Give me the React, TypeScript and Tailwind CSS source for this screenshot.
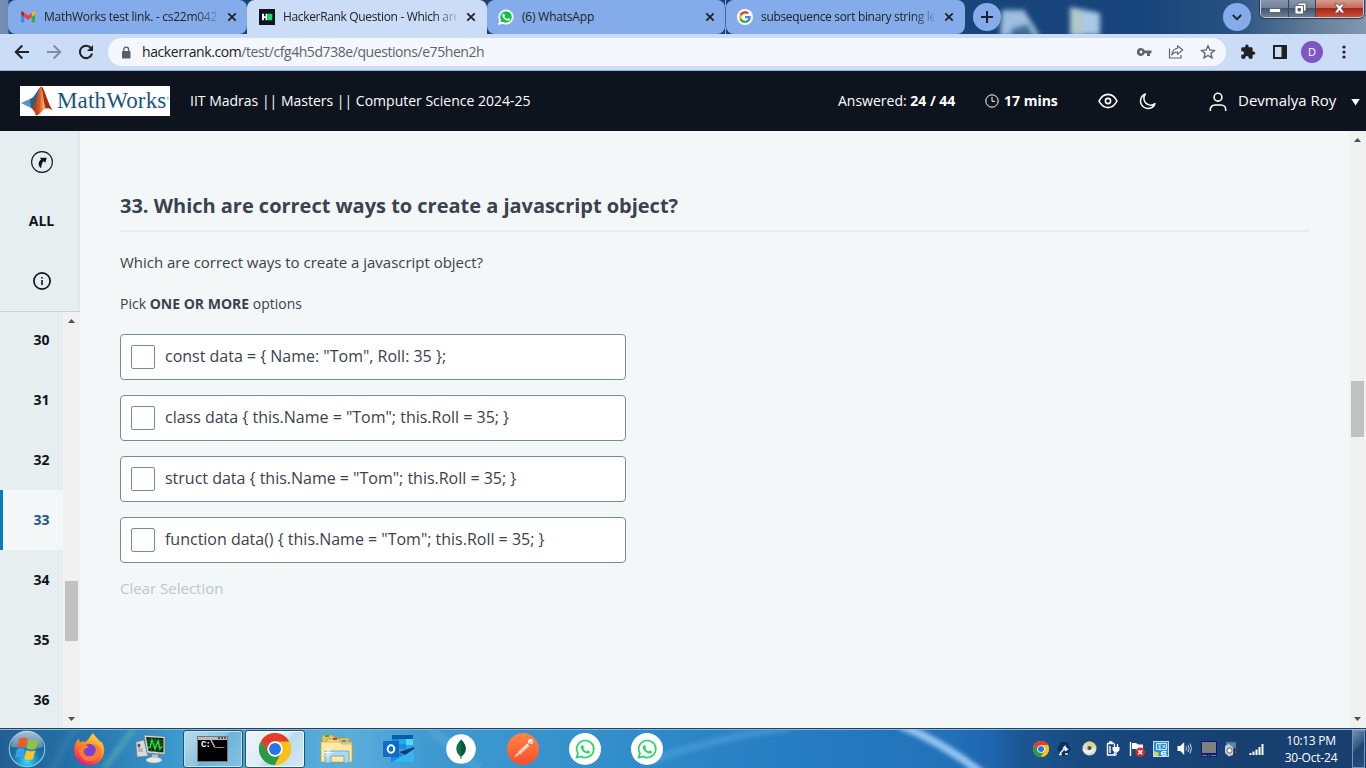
import React from "react";

const ChromeLogo = ({ size }: { size: number }) => (
  <svg width={size} height={size} viewBox="0 0 48 48" className="shrink-0">
    <circle cx="24" cy="24" r="24" fill="#fbc116" />
    <path d="M24 13 H45.3 L44.8 12 A24 24 0 0 0 3.2 12 L14 30 Z" fill="#e33b2e" />
    <path d="M3.2 12 L14.5 29.5 L24 35 L33.5 29.5 L24 48 A24 24 0 0 1 3.2 12Z" fill="#2a9a48" />
    <path d="M33.5 29.5 L24 48 A24 24 0 0 0 45.3 13 H24 Z" fill="#fbc116" />
    <circle cx="24" cy="24" r="11.5" fill="#fff" />
    <circle cx="24" cy="24" r="9" fill="#2a72e8" />
  </svg>
);

const waBubble =
  "M12 2a10 10 0 0 0-8.6 15.1L2 22l5-1.3A10 10 0 1 0 12 2Z";
const waPhone =
  "M8.9 6.9c-.3-.6-.5-.6-.8-.6h-.6c-.3 0-.7.1-1 .5-.4.4-1.300 1.200-1.300 3s1.300 3.500 1.500 3.700c.2.3 2.500 4 6.200 5.400 3 1.200 3.700.9 4.300.8.7 0 2.100-.8 2.400-1.700.3-.8.3-1.500.2-1.700-.1-.2-.3-.3-.7-.4l-2.400-1.200c-.3-.1-.6-.2-.8.2l-1.100 1.400c-.2.2-.4.3-.8.1a9 9 0 0 1-4.700-4.200c-.4-.6.4-.6 1-1.900.1-.2 0-.4 0-.6z";

const WhatsAppTask = () => (
  <svg width="32" height="32" viewBox="0 0 32 32">
    <circle cx="16" cy="16" r="16" fill="#fff" />
    <path d="M16.200 7.500a8.500 8.500 0 0 0-7.300 12.800L7.700 24.600l4.400-1.200A8.500 8.500 0 1 0 16.200 7.500Z" fill="none" stroke="#2bd366" strokeWidth="1.700" />
    <g transform="translate(8.6 8.300) scale(.62)">
      <path d={waPhone} fill="#2bd366" />
    </g>
  </svg>
);

const Close = () => (
  <svg width="10" height="10" viewBox="0 0 10 10" className="shrink-0">
    <path d="M1.300 1.300 8.700 8.700M8.700 1.300 1.300 8.700" stroke="#202124" strokeWidth="1.800" />
  </svg>
);

const Gmail = () => (
  <svg width="16" height="16" viewBox="0 0 16 16" className="shrink-0">
    <path d="M1 4v8.500c0 .6.400 1 1 1h2.300V6.700z" fill="#4285f4" />
    <path d="M15 4v8.500c0 .6-.400 1-1 1h-2.300V6.700z" fill="#34a853" />
    <path d="M11.700 3.800 13 2.800c.9-.600 2-.1 2 1v1.800l-3.300 2.500z" fill="#fbbc04" />
    <path d="M4.300 3.800 3 2.800c-.900-.600-2-.1-2 1v1.800l3.300 2.500z" fill="#c5221f" />
    <path d="M4.300 3.800 8 6.600l3.700-2.800v4.300L8 10.900 4.300 8.100z" fill="#ea4335" />
  </svg>
);

const HackerRank = () => (
  <svg width="16" height="16" viewBox="0 0 16 16" className="shrink-0">
    <rect width="16" height="16" fill="#0e141e" />
    <path d="M3 4.700h2v2.500h1.500V4.700h2v6.600h-2V8.900H5v2.400H3z" fill="#fff" />
    <rect x="9" y="4.700" width="4.300" height="6.600" fill="#00e95f" />
  </svg>
);

const WhatsAppTab = () => (
  <svg width="16" height="16" viewBox="0 0 24 24" className="shrink-0">
    <path d={waBubble} fill="#12c143" stroke="#fff" strokeWidth="2.600" />
    <g transform="translate(2.200 1.800) scale(.8)">
      <path d={waPhone} fill="#fff" />
    </g>
  </svg>
);

const Google = () => (
  <svg width="16" height="16" viewBox="0 0 32 32" className="shrink-0">
    <circle cx="16" cy="16" r="16" fill="#fff" />
    <g transform="translate(4 4)">
      <path fill="#4285f4" d="M23.500 12.300c0-.9-.1-1.500-.2-2.200H12v4.500h6.500a5.600 5.600 0 0 1-2.400 3.600v3h3.900c2.200-2.100 3.500-5.200 3.500-8.900z" />
      <path fill="#34a853" d="M12 24c3.200 0 6-1.100 8-2.900l-3.900-3a7.200 7.200 0 0 1-10.700-3.800h-4v3.100A12 12 0 0 0 12 24z" />
      <path fill="#fbbc05" d="M5.400 14.300a7.200 7.200 0 0 1 0-4.600V6.600h-4a12 12 0 0 0 0 10.800z" />
      <path fill="#ea4335" d="M12 4.800c1.800 0 3.300.6 4.600 1.800L20 3.200A12 12 0 0 0 1.400 6.600l4 3.100A7.200 7.200 0 0 1 12 4.800z" />
    </g>
  </svg>
);

type TabProps = { icon: React.ReactNode; title: string; box: string; text: string; fade?: boolean };

const Tab = ({ icon, title, box, text, fade }: TabProps) => (
  <div className={"flex h-[34px] shrink-0 items-center text-[12px] text-[#202124] " + box}>
    {icon}
    <span
      className={
        "ml-2 min-w-0 flex-1 whitespace-nowrap leading-[18px] " +
        text +
        (fade ? " [mask-image:linear-gradient(90deg,#000_87%,transparent_103%)]" : "")
      }
    >
      {title}
    </span>
    <span className="ml-[10px] flex">
      <Close />
    </span>
  </div>
);

const TabStrip = () => (
  <div className="relative flex h-[34px] bg-[linear-gradient(90deg,#7890ae_0,#6f8cb1_8px,#174478_9px,#17447a_1140px,#275080_1230px,#67809d_1320px,#8298af_1366px)] pl-2">
    <svg className="absolute left-[960px] top-0" width="160" height="34" viewBox="0 0 160 34">
      <defs>
        <filter id="soft" x="-30%" y="-30%" width="160%" height="160%">
          <feGaussianBlur stdDeviation="2.500" />
        </filter>
      </defs>
      <g filter="url(#soft)">
        <path d="M42 10h22l16 26H40z" fill="#9fbfe0" />
        <path d="M52 28l16-4 6 12H50z" fill="#3f709c" />
        <path d="M110 7l30 6v22h-30z" fill="#a9c9e8" />
        <path d="M111 8l12 2v26h-12z" fill="#b1c9c9" />
      </g>
    </svg>
    <Tab icon={<Gmail />} title="MathWorks test link. - cs22m042" box="w-[239px] rounded-[8px] bg-[#85acea] pl-[12px] pr-[10px]" text="tracking-[-0.27px]" fade />
    <Tab icon={<HackerRank />} title="HackerRank Question - Which are" box="w-[240px] rounded-t-[8px] bg-[#cbdcf7] pl-[12px] pr-[11px]" text="tracking-[-0.34px]" fade />
    <Tab icon={<WhatsAppTab />} title="(6) WhatsApp" box="w-[238px] rounded-[8px] bg-[#85acea] pl-[11px] pr-[10px]" text="tracking-[-0.2px]" />
    <div className="flex h-[34px] w-px items-center bg-[#85acea]">
      <div className="h-5 w-px bg-[#4a6796]" />
    </div>
    <Tab icon={<Google />} title="subsequence sort binary string le" box="w-[239px] rounded-[8px] bg-[#85acea] pl-[11px] pr-[11px]" text="tracking-[-0.33px]" fade />
    <div className="relative ml-2 mt-[3px] flex size-7 items-center justify-center rounded-full bg-[#85acea]">
      <svg width="12" height="12" viewBox="0 0 12 12">
        <path d="M6 0v12M0 6h12" stroke="#202124" strokeWidth="2" />
      </svg>
    </div>
    <div className="ml-[222px] mt-[3px] flex size-7 items-center justify-center rounded-full bg-[#85acea]">
      <svg width="10" height="7" viewBox="0 0 10 7">
        <path d="M.8 1 5 5.200 9.200 1" fill="none" stroke="#202124" strokeWidth="1.800" />
      </svg>
    </div>
    <div className="ml-[9px] flex h-[18px] w-[104px] overflow-hidden rounded-b-[5px] border border-t-0 border-[#c4ced9] shadow-[0_0_1px_1px_#26384d]">
      <div className="flex w-[28px] items-center justify-center border-r border-[#33475e] bg-[linear-gradient(#8796aa_0,#6f8198_45%,#42566f_50%,#6b7e94_100%)]">
        <svg width="12" height="6" viewBox="0 0 12 6" className="mt-1">
          <rect x=".5" y=".5" width="11" height="4" rx=".5" fill="#fff" stroke="#4b5563" strokeWidth=".8" />
        </svg>
      </div>
      <div className="flex w-[27px] items-center justify-center border-r border-[#33475e] bg-[linear-gradient(#8796aa_0,#6f8198_45%,#42566f_50%,#6b7e94_100%)] pb-px pr-[3px]">
        <svg width="13" height="13" viewBox="0 0 13 13">
          <path d="M4 1h8v8H9.500V3.500H4z" fill="#fff" stroke="#4b5563" strokeWidth=".8" />
          <path d="M1 3.500h8.500V12H1zM4 6.500v2.500h2.500V6.500z" fillRule="evenodd" fill="#fff" stroke="#4b5563" strokeWidth=".8" />
        </svg>
      </div>
      <div className="flex flex-1 items-center justify-center bg-[linear-gradient(#d99a8f_0,#c66a59_45%,#a82613_50%,#c8503a_100%)] pb-px">
        <svg width="13" height="11" viewBox="0 0 13 11">
          <path d="M1.500 1h3.200L6.500 3l1.800-2h3.200L8.300 5.300 11.700 10H8.300L6.500 7.500 4.700 10H1.300l3.400-4.700z" fill="#fff" stroke="#4a4f5c" strokeWidth=".8" />
        </svg>
      </div>
    </div>
  </div>
);

const Toolbar = () => (
  <div className="flex h-[37px] items-center border-b border-[#9fb4d3] bg-[#cbdcf7] pl-[14px]">
    <svg width="16" height="16" viewBox="0 0 16 16">
      <path d="M15 8H2M8.300 1.500 1.800 8l6.500 6.500" fill="none" stroke="#202124" strokeWidth="2" />
    </svg>
    <svg width="16" height="16" viewBox="0 0 16 16" className="ml-4">
      <path d="M1 8h13M7.700 1.500 14.200 8l-6.500 6.500" fill="none" stroke="#838d9f" strokeWidth="2" />
    </svg>
    <svg width="16" height="16" viewBox="0 0 16 16" className="ml-4">
      <path d="M13.300 4.500A6.200 6.200 0 1 0 14.100 9.500" fill="none" stroke="#202124" strokeWidth="2" />
      <path d="M15 1v6H9z" fill="#202124" />
    </svg>
    <div className="ml-[14px] flex h-7 w-[1118px] items-center rounded-full bg-[#f4f7fd] pl-[13px]">
      <svg width="10" height="13" viewBox="0 0 10 13">
        <rect x="1" y="5" width="8.500" height="7.500" rx="1" fill="#5a5d62" />
        <path d="M2.800 5V3.500a2.400 2.400 0 0 1 4.800 0V5" fill="none" stroke="#5a5d62" strokeWidth="1.300" />
      </svg>
      <span className="ml-[11px] w-[400px] whitespace-nowrap text-[14px] leading-5 tracking-[-0.43px] text-[#5f6368]">
        <span className="text-[#202124]">hackerrank.com</span>/test/cfg4h5d738e/questions/e75hen2h
      </span>
      <svg width="15" height="10" viewBox="0 0 15 10" className="ml-[595px]">
        <path d="M4 1a4 4 0 1 0 3.700 5.300H10V9h3V6.300h1.500V3.600H7.700A4 4 0 0 0 4 1Zm0 2.600a1.400 1.400 0 1 1 0 2.800 1.400 1.400 0 0 1 0-2.800Z" fill="#5f6368" fillRule="evenodd" />
      </svg>
      <svg width="16" height="16" viewBox="0 0 16 16" className="ml-[16px]">
        <path d="M1.500 4.500v9.500h11.500V11" fill="none" stroke="#5f6368" strokeWidth="1.200" />
        <path d="M9.500 1.800 14.700 6 9.500 10.300V8C6.800 8 5 9 3.700 11c.4-3.300 2.300-6.200 5.800-6.800z" fill="none" stroke="#5f6368" strokeWidth="1.100" strokeLinejoin="round" />
      </svg>
      <svg width="16" height="16" viewBox="0 0 16 16" className="ml-4">
        <path d="m8 1.800 1.800 4.200 4.600.4-3.500 3 1.100 4.500L8 11.500l-4 2.400 1.100-4.500-3.500-3L6.200 6z" fill="none" stroke="#5f6368" strokeWidth="1.300" />
      </svg>
    </div>
    <svg width="16" height="16" viewBox="0 0 16 16" className="ml-[14px]">
      <path d="M13.600 7.400h-1V4.600c0-.7-.6-1.300-1.300-1.300H8.600v-1a1.700 1.700 0 0 0-3.400 0v1H2.600c-.7 0-1.300.6-1.300 1.300v2.600h1a1.800 1.800 0 0 1 0 3.600h-1v2.600c0 .7.600 1.300 1.300 1.300h2.600v-1a1.800 1.800 0 0 1 3.600 0v1h2.500c.7 0 1.300-.6 1.300-1.300v-2.600h1a1.700 1.700 0 0 0 0-3.400z" fill="#202124" />
    </svg>
    <svg width="14" height="14" viewBox="0 0 14 14" className="ml-[17px]">
      <path d="M0 0h14v14H0zM2 2v10h6.500V2z" fillRule="evenodd" fill="#202124" />
    </svg>
    <div className="ml-[14px] flex size-[22px] items-center justify-center rounded-full bg-[#7e57c2] text-[11px] text-white">D</div>
    <svg width="4" height="14" viewBox="0 0 4 14" className="ml-[19px]">
      <circle cx="2" cy="2" r="1.600" fill="#202124" />
      <circle cx="2" cy="7" r="1.600" fill="#202124" />
      <circle cx="2" cy="12" r="1.600" fill="#202124" />
    </svg>
  </div>
);

const MathWorksLogo = () => (
  <div className="flex h-[30px] w-[150px] items-center bg-white">
    <svg width="36" height="30" viewBox="0 0 36 30" className="shrink-0">
      <defs>
        <linearGradient id="mwA" x1="0" x2="1">
          <stop offset="0" stopColor="#8c2a12" />
          <stop offset=".4" stopColor="#d95a23" />
          <stop offset=".6" stopColor="#f5b070" />
          <stop offset="1" stopColor="#a5301a" />
        </linearGradient>
      </defs>
      <path d="M1 17 11 12.500l5 4.500-5 5z" fill="#4f97cf" />
      <path d="M10 13c5-1 7-10 11-12l-4 18-6 3z" fill="#2b5f86" />
      <path d="M21 .5c4 0 6 16.500 11.800 24-4-3-7-3-10 0-3 3-4.500 5-7 5-1-4-2.500-6.500-5-7.500C17 20 17 4 21 .5z" fill="url(#mwA)" />
      <path d="M21 .5c4 2 6 17 11.800 24-3-3-5-3-7-2C23 15 23.500 6 21 .5z" fill="#9f2e1b" />
    </svg>
    <span className="ml-px whitespace-nowrap font-['Liberation_Serif',serif] text-[23px] leading-[30px] tracking-[0.15px] text-[#17557f]">
      MathWorks
    </span>
    <span className="-mt-1 text-[3px] text-[#17557f]">®</span>
  </div>
);

const Header = () => (
  <header className="flex h-[60px] items-center bg-[#0e141e] pl-5 text-[14px] text-white">
    <MathWorksLogo />
    <div className="-mt-0.5 ml-5 w-[648px] whitespace-nowrap">IIT Madras || Masters || Computer Science 2024-25</div>
    <div className="-mt-0.5 w-[147px] whitespace-nowrap">
      Answered: <b className="font-bold">24 / 44</b>
    </div>
    <svg width="14" height="14" viewBox="0 0 14 14" fill="none" stroke="#fff">
      <circle cx="7" cy="7" r="6.200" />
      <path d="M7 3v4.300h3" />
    </svg>
    <b className="-mt-0.5 ml-[5px] w-[94px] whitespace-nowrap font-bold">17 mins</b>
    <svg width="20" height="16" viewBox="0 0 20 16" fill="none" stroke="#fff" strokeWidth="1.600">
      <path d="M1 8c2-4 5.200-6.600 9-6.600S17 4 19 8c-2 4-5.200 6.600-9 6.600S3 12 1 8z" />
      <circle cx="10" cy="8" r="2.600" />
    </svg>
    <svg width="17" height="17" viewBox="0 0 24 24" fill="none" stroke="#fff" strokeWidth="2.100" className="ml-[21px]">
      <path d="M22.500 15A10.500 10.500 0 1 1 9 1.500a9.600 9.600 0 0 0 13.500 13.500z" strokeLinejoin="round" />
    </svg>
    <svg width="18" height="20" viewBox="0 0 18 20" fill="none" stroke="#fff" strokeWidth="1.600" className="ml-[53px] mt-px">
      <circle cx="9" cy="5.200" r="3.900" />
      <path d="M1.300 19v-1.500a4.500 4.500 0 0 1 4.500-4.500h6.400a4.500 4.500 0 0 1 4.500 4.500V19" />
    </svg>
    <span className="-mt-0.5 ml-[11px] w-[113px] whitespace-nowrap text-[15px]">Devmalya Roy</span>
    <svg width="9" height="7" viewBox="0 0 9 7" className="mt-0.5">
      <path d="M.3 0h8.500L4.600 6.500z" fill="#fff" />
    </svg>
  </header>
);

const Arrow = ({ up }: { up?: boolean }) => (
  <svg width="7" height="4" viewBox="0 0 7 4" className="shrink-0">
    <path d={up ? "M0 4 3.500 0 7 4z" : "M0 0h7L3.500 4z"} fill="#505050" />
  </svg>
);

const Sidebar = () => (
  <aside className="flex w-20 flex-col bg-[#e7eeef] shadow-[inset_-2px_0_2px_-1px_#dbe3e6] text-[14px] font-bold text-[#0e141e]">
    <div className="flex h-[181px] flex-col items-center border-b border-[#c5d1d3] pl-[3px]">
      <div className="flex h-[61px] items-center">
        <svg width="22" height="22" viewBox="0 0 22 22">
          <circle cx="11" cy="11" r="10.400" fill="none" stroke="#0e141e" strokeWidth="1.100" />
          <path d="M8.700 6.800h7l-1.300 5-1.800-1.500c-1.500 1-2 3-2.500 7C6.800 15 6.800 11 10.200 8.300z" fill="#0e141e" />
        </svg>
      </div>
      <div className="flex h-[59px] items-center pb-0.5">ALL</div>
      <div className="flex h-[60px] items-center">
        <svg width="18" height="18" viewBox="0 0 18 18">
          <circle cx="9" cy="9" r="8.100" fill="none" stroke="#0e141e" strokeWidth="1.700" />
          <path d="M8.200 5h1.600v1.600H8.200zM8.200 8h1.600v5H8.200z" fill="#0e141e" />
        </svg>
      </div>
    </div>
    <div className="flex min-h-0 flex-1">
      <div className="-mt-0.5 h-[418px] w-[63px] overflow-hidden">
        {["30", "31", "32", "33", "34", "35", "36"].map((n) => (
          <div
            key={n}
            className={
              "flex h-[60px] items-center justify-center pb-0.5 pr-0.5 " +
              (n === "33" ? "border-l-[3px] border-[#097bbf] bg-[#f3f7f7] pl-[19px] text-[#1c5a85]" : "pl-[22px]")
            }
          >
            {n}
          </div>
        ))}
      </div>
      <div className="flex w-[17px] flex-col items-center bg-[#f1f1f1] py-[7px]">
        <Arrow up />
        <div className="mt-[258px] h-[60px] w-[13px] bg-[#c1c1c1]" />
        <div className="flex-1" />
        <Arrow />
      </div>
    </div>
  </aside>
);

const options = [
  'const data = { Name: "Tom", Roll: 35 };',
  'class data { this.Name = "Tom"; this.Roll = 35; }',
  'struct data { this.Name = "Tom"; this.Roll = 35; }',
  'function data() { this.Name = "Tom"; this.Roll = 35; }',
];

const Question = () => (
  <main className="flex-1 bg-[#f3f7f7] pl-10 text-[#39424e]">
    <h1 className="mt-[60px] h-[41px] w-[1190px] border-b-2 border-[#e7eeef] text-[20px] font-bold leading-[30px] tracking-[-0.02px]">
      33. Which are correct ways to create a javascript object?
    </h1>
    <p className="mt-[19px] text-[15px] leading-[22px] tracking-[-0.02px]">Which are correct ways to create a javascript object?</p>
    <p className="mt-[20px] text-[14px] leading-[22px]">
      Pick <b className="font-bold">ONE OR MORE</b> options
    </p>
    <div className="mt-[19px] flex w-[506px] flex-col gap-[15px]">
      {options.map((o) => (
        <label key={o} className="flex h-[46px] items-center rounded-[4px] border border-[#738f93] bg-white pl-[10px] text-[16px]">
          <span className="size-6 rounded-[2px] border border-[#738f93]" />
          <span className="-mt-0.5 ml-[10px] whitespace-nowrap leading-6 tracking-[-0.01px]">{o}</span>
        </label>
      ))}
    </div>
    <p className="mt-[14px] text-[15px] leading-[22px] text-[#b7c9cc]">Clear Selection</p>
  </main>
);

const StartOrb = () => (
  <svg width="38" height="38" viewBox="0 0 38 38">
    <defs>
      <radialGradient id="orb" cx=".5" cy=".85" r=".8">
        <stop offset="0" stopColor="#2ee0ff" />
        <stop offset=".45" stopColor="#1b77b0" />
        <stop offset="1" stopColor="#174f7d" />
      </radialGradient>
      <linearGradient id="orbTop" x1="0" y1="0" x2="0" y2="1">
        <stop offset="0" stopColor="#d8e6ef" />
        <stop offset="1" stopColor="#7296b0" />
      </linearGradient>
    </defs>
    <circle cx="19" cy="19" r="17.700" fill="url(#orb)" stroke="#8fc2df" strokeWidth="1.200" />
    <path d="M3 17a16 16 0 0 1 32 0c-9 3-19 0-32 0z" fill="url(#orbTop)" opacity=".75" />
    <path d="M11.500 8.500c3.200-1.500 5.500-1.200 8.200.2l-2.200 9c-2.700-1.300-5.500-1.400-8.200 0z" fill="#ee5a24" />
    <path d="M20.800 9.500c3 1.400 6.200 1.300 9.700 0l-2.600 9.200c-3.200 1.300-6.200 1.200-9.200-.1z" fill="#8cc63f" />
    <path d="M8.900 19.100c2.800-1.300 5.600-1.200 8.200.2l-2.200 8.700c-2.700-1.500-5.400-1.300-8.100 0z" fill="#3aa0e8" />
    <path d="M18.300 20.200c2.900 1.300 5.900 1.300 9.200 0L25 29c-3 1.300-6 1.200-8.900-.1z" fill="#fdc52c" />
  </svg>
);

const Firefox = () => (
  <svg width="32" height="32" viewBox="0 0 32 32">
    <defs>
      <linearGradient id="ff" x1=".8" y1="0" x2=".3" y2="1">
        <stop offset="0" stopColor="#ffe14a" />
        <stop offset=".4" stopColor="#ff9a26" />
        <stop offset=".75" stopColor="#ff4a45" />
        <stop offset="1" stopColor="#e3177f" />
      </linearGradient>
    </defs>
    <path d="M20 0c1 3 5 5 7 9l1-1c2 3 3.500 6 3.200 10A15 15 0 0 1 1.200 17C1 12 3 8 6 5.500c0 2 .5 3 1 3.700C8.500 8.300 11 8.500 12.500 9 15 7 17 4 20 0z" fill="url(#ff)" />
    <circle cx="16.500" cy="17" r="6.300" fill="#7b42d6" />
    <path d="M7 12c3-1 6 0 8.500 1.500-1 2-3.500 1.800-4.500 3.500-1.500 3 1 6.500 5 6.500 3.500 0 6.500-2 7.200-5.500.5-3-.7-5.200-2.700-7 5 1 7.500 4 6.700 9A11 11 0 0 1 6 20c-1-3-.5-6 1-8z" fill="#ff7a33" />
  </svg>
);

const Monitor = () => (
  <svg width="32" height="30" viewBox="0 0 32 30">
    <path d="M1 8l8-2 4 16-11 1z" fill="#d9dcde" stroke="#777" strokeWidth=".6" />
    <path d="M3 10h2v3H3zM3 15h5M3 17h5" fill="#333" stroke="#777" strokeWidth=".7" />
    <path d="M9 1l21 1.500v18L12 19z" fill="#d7dbdc" stroke="#6d7374" strokeWidth=".7" />
    <path d="M11 3l17.500 1v14.500L13.500 17z" fill="#0b3312" />
    <path d="M12 7h16M12 10h16M13 13h15M16 4v14M20 4v14M24 5v14" stroke="#1f8a2e" strokeWidth=".7" />
    <path d="M13 14l2-1 2-7 3 9 3-8 2 8 2-3" fill="none" stroke="#39e34b" strokeWidth="1.200" />
    <path d="M17 20.500h6v4h-6z" fill="#c0c5c7" />
    <ellipse cx="19" cy="26" rx="8" ry="3" fill="#e6e9ea" stroke="#999" strokeWidth=".5" />
  </svg>
);

const Terminal = () => (
  <div className="flex h-[26px] w-[31px] flex-col border border-[#777] bg-black">
    <div className="flex h-[3px] items-center justify-end gap-px bg-[#b8bcc0] pr-px">
      <span className="size-[2px] bg-[#555]" />
      <span className="size-[2px] bg-[#555]" />
      <span className="size-[2px] bg-[#555]" />
    </div>
    <div className="pl-[3px] font-['Liberation_Mono',monospace] text-[9px] font-bold leading-[11px] tracking-[-0.9px] text-white">C:\__</div>
  </div>
);

const Explorer = () => (
  <svg width="34" height="32" viewBox="0 0 34 32">
    <path d="M2 5l1-3h10l2 3h14v24H2z" fill="#e7c55e" stroke="#b8912f" strokeWidth=".7" />
    <rect x="5" y="2" width="4" height="2" fill="#1fb24a" />
    <path d="M7 6h12l2 3h11v20H5z" fill="#f4dc85" stroke="#b8912f" strokeWidth=".7" />
    <rect x="13" y="5" width="4" height="2" fill="#d43a2a" />
    <rect x="22" y="7" width="4" height="2" fill="#3498db" />
    <path d="M1 9h19l2 2h10v18H1z" fill="#fbe9a5" stroke="#c9a445" strokeWidth=".7" />
    <path d="M5 18h24v12h-5v-7H11v7H5z" fill="#a6d9f0" stroke="#579fc4" strokeWidth=".8" opacity=".95" />
    <path d="M8 14v11M3 19.500h10M5 16l6 7M11 16l-6 7" stroke="#fff" strokeWidth=".8" />
  </svg>
);

const Outlook = () => (
  <svg width="32" height="30" viewBox="0 0 32 30">
    <path d="M9 1h21v14H9z" fill="#1490df" />
    <path d="M9 1h21v4H9z" fill="#0a5ca8" />
    <path d="M16 5h7v5h-7z" fill="#28a8ea" />
    <path d="M23 5h7v6h-7z" fill="#50d9ff" />
    <path d="M23 11h7v5h-7z" fill="#28a8ea" />
    <path d="M8 14l12 7 11-7v14.500H8z" fill="#1c84dc" />
    <path d="M8 28.500 31 15v13.500z" fill="#35b5f0" />
    <path d="M16 18l6 3 9-6v-2z" fill="#123c75" />
    <rect x="0" y="7" width="16" height="16" rx="1" fill="#0f6cc6" />
    <ellipse cx="8" cy="15" rx="3.300" ry="3.700" fill="none" stroke="#fff" strokeWidth="2" />
  </svg>
);

const Mongo = () => (
  <svg width="30" height="30" viewBox="0 0 30 30">
    <circle cx="15" cy="15" r="14.800" fill="#fff" />
    <path d="M15 5.500c3 3 4.700 6 4.700 9.200 0 3.500-2 6-4.200 7.800l-.2 2.500h-.7l-.3-2.500c-2-1.500-4-4.300-4-7.700 0-3.500 2-6.200 4.700-9.300z" fill="#08734b" />
    <path d="M15 5.500c3 3 4.700 6 4.700 9.200 0 3.500-2 6-4.500 7.800z" fill="#07583d" />
  </svg>
);

const Postman = () => (
  <svg width="32" height="32" viewBox="0 0 32 32">
    <defs>
      <linearGradient id="pm" x1="0" y1="0" x2="0" y2="1">
        <stop offset="0" stopColor="#ff8744" />
        <stop offset="1" stopColor="#ff4d2c" />
      </linearGradient>
    </defs>
    <circle cx="16" cy="16" r="16" fill="url(#pm)" />
    <circle cx="23.500" cy="8.500" r="2.500" fill="#fff" />
    <path d="M20 10.500l2.500 2.200-9.500 8.800-2.200-2.300z" fill="#fff" />
    <path d="M10.500 20l1.500 1.500L7 24.500l3.500-4.500z" fill="#fff" />
    <path d="M19 11.500l-8.500 8.500M21.500 12.500l-9 8" stroke="#ff6a38" strokeWidth=".7" />
    <path d="M22 10.500l3-2" stroke="#ff6a38" strokeWidth=".8" />
  </svg>
);

const Slot = ({ children }: { children: React.ReactNode }) => (
  <div className="flex w-[62px] shrink-0 items-center justify-center">{children}</div>
);

const Tray = ({ w, children }: { w: string; children: React.ReactNode }) => (
  <div className={"flex shrink-0 items-center justify-center " + w}>{children}</div>
);

const Taskbar = () => (
  <footer className="relative flex h-10 items-stretch overflow-hidden border-t border-[#24425f] bg-[linear-gradient(90deg,#225f92_0,#2473a9_80px,#3d9bd0_180px,#5aaedb_350px,#3e99d0_430px,#3390cb_600px,#2983c5_720px,#2271b9_950px,#1f65b0_990px,#1c5793_1020px,#184a80_1080px,#173f70_1250px,#173f6e_1366px)] shadow-[inset_0_1px_0_#86b7dc]">
    <svg className="absolute left-0 top-0" width="1366" height="40" viewBox="0 0 1366 40">
      <defs>
        <filter id="haze" x="-20%" y="-20%" width="140%" height="140%">
          <feGaussianBlur stdDeviation="2" />
        </filter>
      </defs>
      <path d="M900-4Q944 14 984 46" fill="none" stroke="#94c3ef" strokeWidth="8" filter="url(#haze)" />
      <path d="M134 0Q120 18 104 40" fill="none" stroke="#74c5b0" strokeWidth="6" opacity=".4" filter="url(#haze)" />
      <path d="M50 44 76-4" fill="none" stroke="#68a9cb" strokeWidth="8" opacity=".15" filter="url(#haze)" />
      <path d="M650 32Q710 10 790-2" fill="none" stroke="#62aee2" strokeWidth="8" opacity=".4" filter="url(#haze)" />
      <path d="M430 0 480 40" fill="none" stroke="#69b7e0" strokeWidth="10" opacity=".3" filter="url(#haze)" />
    </svg>
    <div className="relative flex flex-1">
      <div className="flex w-[58px] items-center pl-2">
        <StartOrb />
      </div>
      <Slot><Firefox /></Slot>
      <Slot><Monitor /></Slot>
      <Slot>
        <div className="flex h-[38px] w-[60px] items-center justify-center rounded-[3px] border border-[#245274] bg-[linear-gradient(135deg,#b9dcec_0,#8fc5e0_48%,#6cb4d9_52%,#84c2e2_100%)] pr-px shadow-[inset_0_0_0_1px_#c4e2f1]">
          <Terminal />
        </div>
      </Slot>
      <Slot>
        <div className="flex h-[38px] w-[60px] items-center justify-center rounded-[3px] border border-[#245274] bg-[linear-gradient(135deg,#f0f6f9_0,#dcebf4_48%,#b9dbed_55%,#d8ebf5_100%)] shadow-[inset_0_0_0_1px_#f4fafd]">
          <ChromeLogo size={32} />
        </div>
      </Slot>
      <Slot><Explorer /></Slot>
      <Slot><Outlook /></Slot>
      <Slot><Mongo /></Slot>
      <Slot><Postman /></Slot>
      <Slot><WhatsAppTask /></Slot>
      <Slot><WhatsAppTask /></Slot>
    </div>
    <div className="relative flex">
      <Tray w="w-[22px]"><ChromeLogo size={16} /></Tray>
      <Tray w="w-[24px]">
        <svg width="14" height="14" viewBox="0 0 14 14">
          <path d="M4 0h6l4 7-4 7H4L0 7z" fill="#0c2f5c" />
          <path d="M2 12.500h3M8 12h3M3 11.500l4-4.500" stroke="#dfefff" strokeWidth="1.600" fill="none" />
          <path d="M5.500 6 8.500 3l.500 2L10.500 6.500l1.500.5-3.500 2.500z" fill="#dfefff" />
        </svg>
      </Tray>
      <Tray w="w-[26px]">
        <svg width="15" height="15" viewBox="0 0 15 15">
          <circle cx="7.500" cy="7.500" r="7" fill="#dcdcce" />
          <path d="M4 1.500a7 7 0 0 1 10 4l-3.500 1a3.500 3.500 0 0 0-5-2z" fill="#ead27a" />
          <path d="M1 8.500q6 6 11-1" stroke="#f4f4ee" strokeWidth="2" fill="none" />
          <circle cx="7.500" cy="7" r="2.100" fill="#4e5250" />
        </svg>
      </Tray>
      <Tray w="w-[22px]">
        <svg width="14" height="15" viewBox="0 0 14 15" fill="none" stroke="#fff">
          <path d="M3 1h3.500M1 2.500h7.500M1.500 3v11h7v-2.500" strokeWidth="1.400" />
          <path d="M4 5v7" strokeWidth="1.400" />
          <path d="M8.500 3v3M11.500 3v3" strokeWidth="1.200" />
          <path d="M6.500 6h7v3l-2 2.300h-3l-2-2.300z" fill="#fff" stroke="none" />
          <path d="M10 11v3H7" strokeWidth="1.200" />
        </svg>
      </Tray>
      <Tray w="w-[25px]">
        <svg width="16" height="16" viewBox="0 0 16 16">
          <path d="M1.500 1v14" stroke="#fff" strokeWidth="1.400" />
          <path d="M3 2h4l2 1.500h5V9H8.500L6.500 8H3z" fill="#fff" />
          <circle cx="11.300" cy="11.300" r="4.700" fill="#d92b25" />
          <path d="m9.300 9.300 4 4m0-4-4 4" stroke="#fff" strokeWidth="1.500" />
        </svg>
      </Tray>
      <Tray w="w-[23px]">
        <svg width="16" height="16" viewBox="0 0 16 16">
          <path d="M0 0h16v16H0z" fill="#bfe0f7" />
          <path d="M1 1h14v14H1z" fill="#2c8fd6" />
          <path d="M1 10l5 2-1 3H1z" fill="#e8d44a" />
          <path d="M3.500 2.500v6h10v-6zM5.500 4h2.500M5.500 5.500h2M5.500 7h2.500M9.500 4l3 3M9.500 7l3-3" stroke="#e6f5ff" fill="none" strokeWidth=".9" />
          <path d="M13.500 11c-3-1.500-6 0-5 2s4 1.500 5 .5M9 12.300h4" stroke="#fff" fill="none" strokeWidth="1.100" />
        </svg>
      </Tray>
      <Tray w="w-[24px]">
        <svg width="15" height="15" viewBox="0 0 15 15">
          <path d="M.5 5h2.800L7.200 1v13L3.300 10H.5z" fill="#fff" />
          <path d="M9 5.500q1.300 2 0 4M11 4q2.300 3.500 0 7M13 2.500q3 5 0 10" fill="none" stroke="#dce8f5" strokeWidth=".9" />
        </svg>
      </Tray>
      <Tray w="w-[25px]">
        <svg width="16" height="16" viewBox="0 0 16 16">
          <path d="M.500.500h15v12H.5z" fill="#808080" stroke="#12127d" />
          <path d="M0 14.500h7M9 14.500h7" stroke="#12127d" strokeWidth="2.500" />
          <path d="M1 14.500h5M10 14.500h5" stroke="#808080" strokeWidth="1" />
        </svg>
      </Tray>
      <Tray w="w-[20px]">
        <svg width="12" height="16" viewBox="0 0 12 16">
          <path d="M1 1h10v12H1z" fill="#5b87b5" stroke="#384f69" strokeWidth=".6" />
          <path d="M0 5l4-2 4 4v7l-4 1.500L0 12z" fill="#c9ced2" />
          <circle cx="4.500" cy="9.500" r="2.600" fill="#f4f4f4" stroke="#444" strokeWidth=".8" />
          <path d="M9.500 7v7" stroke="#222" strokeWidth="1.500" />
        </svg>
      </Tray>
      <Tray w="w-[32px]">
        <svg width="16" height="12" viewBox="0 0 16 12">
          <path d="M1.500 12v-2M4.500 12V8.500M7.500 12V6.500M10.500 12V4M13.500 12V1" stroke="#fff" strokeWidth="2" />
        </svg>
      </Tray>
      <div className="flex w-[79px] flex-col items-center justify-center pr-[3px] text-[12px] leading-[17px] tracking-[-0.3px] text-white">
        <span>10:13 PM</span>
        <span className="tracking-[-0.2px]">30-Oct-24</span>
      </div>
      <div className="mr-px mt-px w-[13px] border border-[#7692b1] bg-[linear-gradient(135deg,#7590ae_0,#355a85_40%,#1c4371_50%,#28507e_100%)]" />
    </div>
  </footer>
);

export default function App() {
  return (
    <div className="flex h-[768px] w-[1366px] flex-col overflow-hidden font-['Open_Sans','Noto_Sans',sans-serif]">
      <TabStrip />
      <Toolbar />
      <Header />
      <div className="flex h-[597px]">
        <Sidebar />
        <Question />
        <div className="flex w-[17px] flex-col items-center bg-[#f1f1f1] py-[7px]">
          <Arrow up />
          <div className="mt-[239px] h-[56px] w-[13px] bg-[#c1c1c1]" />
          <div className="flex-1" />
          <Arrow />
        </div>
      </div>
      <Taskbar />
    </div>
  );
}
